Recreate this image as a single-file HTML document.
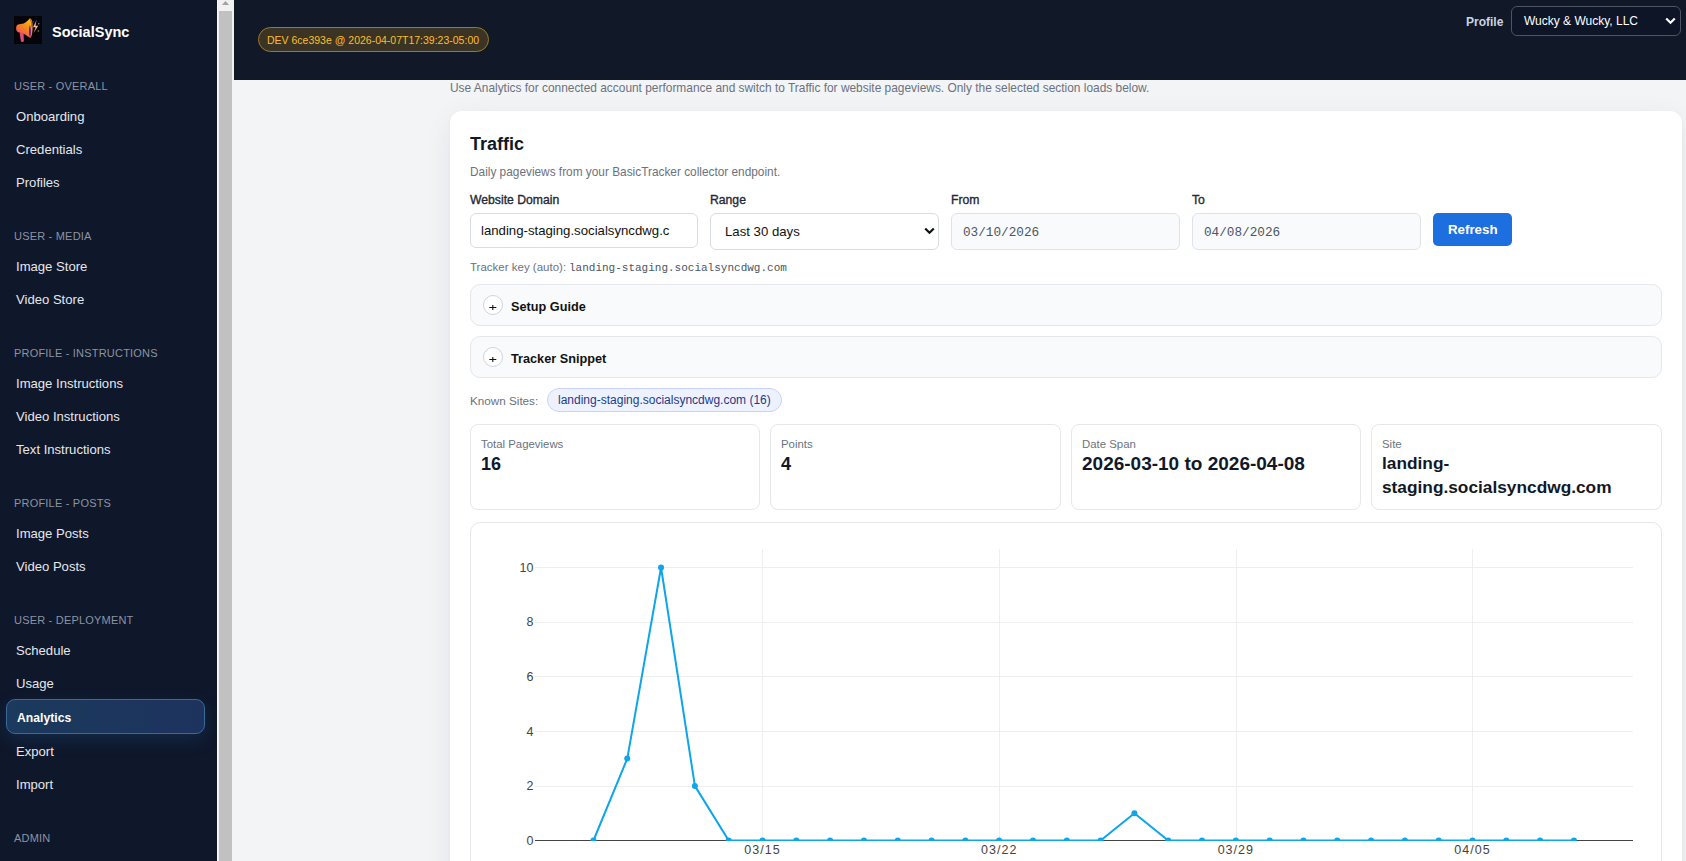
<!DOCTYPE html>
<html><head><meta charset="utf-8"><title>SocialSync - Analytics</title>
<style>
html,body{margin:0;padding:0;}
body{width:1686px;height:861px;overflow:hidden;position:relative;background:#f3f4f6;font-family:"Liberation Sans",sans-serif;}
.t{position:absolute;line-height:1;white-space:pre;}
</style></head><body>
<div style="position:absolute;left:0px;top:0px;width:217px;height:861px;background:#0f172a"></div>
<div style="position:absolute;left:14px;top:16px;width:28px;height:28px;background:#050409;overflow:hidden">
<svg width="28" height="28" viewBox="0 0 28 28">
<defs>
<linearGradient id="mg" x1="0.8" y1="0" x2="0.2" y2="1"><stop offset="0" stop-color="#f7c21a"/><stop offset="0.45" stop-color="#f7871e"/><stop offset="1" stop-color="#e8407e"/></linearGradient>
<linearGradient id="lg" x1="0.5" y1="0" x2="0.5" y2="1"><stop offset="0" stop-color="#9a62d8"/><stop offset="0.5" stop-color="#f0b6b0"/><stop offset="1" stop-color="#d8a040"/></linearGradient>
<filter id="bl" x="-0.2" y="-0.2" width="1.4" height="1.4"><feGaussianBlur stdDeviation="0.35"/></filter>
</defs>
<g filter="url(#bl)">
<path d="M5.6 16.6 L9.6 17.6 L9.9 24.4 C9.8 26.4 7.3 26.6 6.8 24.8 Z" fill="#e0487e"/>
<path d="M2.1 12.4 C2.1 9.4 3.4 8.5 5.5 8.3 L9.6 7.5 C12.2 6.7 14 4.4 15.6 2.6 C17.6 1.9 18.7 6 18.6 11.2 C18.5 17.2 17.6 21.6 16.1 21.7 C14.6 21.3 12.6 19.2 10 18 L5.5 16.6 C3.2 16.1 2.1 14.8 2.1 12.4 Z" fill="url(#mg)"/>
<path d="M6.6 8.6 C6 11 6 14 6.8 16.6" stroke="#f07a20" stroke-width="0.8" fill="none" opacity="0.8"/>
<path d="M15.6 9.2 C17.2 11 17.4 17.2 16.1 21.2 C14.9 19.6 14.6 15 15.6 9.2 Z" fill="#6a2090"/>
<path d="M15.9 3.2 C17.6 5 17.9 9 17.6 11" stroke="#d8541c" stroke-width="1.1" fill="none"/>
<path d="M22.6 3.8 L19 11.2 L21.6 11.2 L19.6 17.2 L24.2 9.8 L21.6 9.8 Z" fill="url(#lg)"/>
<circle cx="24.8" cy="7.8" r="0.7" fill="#b8a030"/>
<circle cx="24.4" cy="15" r="0.7" fill="#a89030"/>
<circle cx="19.2" cy="5.8" r="0.5" fill="#a89030"/>
</g>
</svg></div>
<div class="t" style="left:52px;top:25px;font-size:14.5px;font-weight:700;color:#ffffff;font-family:'Liberation Sans';">SocialSync</div>
<div class="t" style="left:14px;top:81px;font-size:11px;font-weight:400;color:#8b94a3;font-family:'Liberation Sans';letter-spacing:0.2px">USER - OVERALL</div>
<div class="t" style="left:16px;top:110px;font-size:13.1px;font-weight:400;color:#e5e7eb;font-family:'Liberation Sans';">Onboarding</div>
<div class="t" style="left:16px;top:143px;font-size:13.1px;font-weight:400;color:#e5e7eb;font-family:'Liberation Sans';">Credentials</div>
<div class="t" style="left:16px;top:176px;font-size:13.1px;font-weight:400;color:#e5e7eb;font-family:'Liberation Sans';">Profiles</div>
<div class="t" style="left:14px;top:231px;font-size:11px;font-weight:400;color:#8b94a3;font-family:'Liberation Sans';letter-spacing:0.2px">USER - MEDIA</div>
<div class="t" style="left:16px;top:260px;font-size:13.1px;font-weight:400;color:#e5e7eb;font-family:'Liberation Sans';">Image Store</div>
<div class="t" style="left:16px;top:293px;font-size:13.1px;font-weight:400;color:#e5e7eb;font-family:'Liberation Sans';">Video Store</div>
<div class="t" style="left:14px;top:348px;font-size:11px;font-weight:400;color:#8b94a3;font-family:'Liberation Sans';letter-spacing:0.2px">PROFILE - INSTRUCTIONS</div>
<div class="t" style="left:16px;top:377px;font-size:13.1px;font-weight:400;color:#e5e7eb;font-family:'Liberation Sans';">Image Instructions</div>
<div class="t" style="left:16px;top:410px;font-size:13.1px;font-weight:400;color:#e5e7eb;font-family:'Liberation Sans';">Video Instructions</div>
<div class="t" style="left:16px;top:443px;font-size:13.1px;font-weight:400;color:#e5e7eb;font-family:'Liberation Sans';">Text Instructions</div>
<div class="t" style="left:14px;top:498px;font-size:11px;font-weight:400;color:#8b94a3;font-family:'Liberation Sans';letter-spacing:0.2px">PROFILE - POSTS</div>
<div class="t" style="left:16px;top:527px;font-size:13.1px;font-weight:400;color:#e5e7eb;font-family:'Liberation Sans';">Image Posts</div>
<div class="t" style="left:16px;top:560px;font-size:13.1px;font-weight:400;color:#e5e7eb;font-family:'Liberation Sans';">Video Posts</div>
<div class="t" style="left:14px;top:615px;font-size:11px;font-weight:400;color:#8b94a3;font-family:'Liberation Sans';letter-spacing:0.2px">USER - DEPLOYMENT</div>
<div class="t" style="left:16px;top:644px;font-size:13.1px;font-weight:400;color:#e5e7eb;font-family:'Liberation Sans';">Schedule</div>
<div class="t" style="left:16px;top:677px;font-size:13.1px;font-weight:400;color:#e5e7eb;font-family:'Liberation Sans';">Usage</div>
<div style="position:absolute;left:6px;top:699px;width:197px;height:33px;border:1px solid #3a6a98;border-radius:9px;background:linear-gradient(90deg,#1b3a5c,#1d335e);box-shadow:0 6px 18px rgba(30,120,200,0.18)"></div>
<div class="t" style="left:17px;top:712px;font-size:12.2px;font-weight:700;color:#ffffff;font-family:'Liberation Sans';">Analytics</div>
<div class="t" style="left:16px;top:745px;font-size:13.1px;font-weight:400;color:#e5e7eb;font-family:'Liberation Sans';">Export</div>
<div class="t" style="left:16px;top:778px;font-size:13.1px;font-weight:400;color:#e5e7eb;font-family:'Liberation Sans';">Import</div>
<div class="t" style="left:14px;top:833px;font-size:11px;font-weight:400;color:#8b94a3;font-family:'Liberation Sans';letter-spacing:0.2px">ADMIN</div>
<div style="position:absolute;left:217px;top:0px;width:17px;height:861px;background:#f1f1f1"></div>
<div style="position:absolute;left:217px;top:0px;width:1px;height:861px;background:#fafafa"></div>
<div style="position:absolute;left:219px;top:11px;width:13px;height:850px;background:#c1c1c1"></div>
<svg style="position:absolute;left:217px;top:0" width="17" height="8"><polygon points="4.9,4.9 12.1,4.9 8.5,0.9" fill="#a3a3a3"/></svg>
<div style="position:absolute;left:232px;top:80px;width:2px;height:781px;background:#f3f4f6"></div>
<div style="position:absolute;left:234px;top:0px;width:1452px;height:80px;background:#111827"></div>
<div style="position:absolute;left:258px;top:27px;width:229px;height:23px;border:1px solid #9c7a25;border-radius:13px;background:#3b3424"></div>
<div class="t" style="left:267px;top:35px;font-size:10.5px;font-weight:400;color:#fbbf24;font-family:'Liberation Sans';">DEV 6ce393e @ 2026-04-07T17:39:23-05:00</div>
<div class="t" style="left:1466px;top:16px;font-size:12px;font-weight:700;color:#cbd5e1;font-family:'Liberation Sans';">Profile</div>
<div style="position:absolute;left:1511px;top:6px;width:168px;height:28px;border:1px solid #4b5563;border-radius:6px;background:#0e1527"></div>
<div class="t" style="left:1524px;top:15px;font-size:12px;font-weight:400;color:#ffffff;font-family:'Liberation Sans';">Wucky &amp; Wucky, LLC</div>
<svg style="position:absolute;left:1665px;top:17px" width="11" height="8" viewBox="0 0 11 8"><path d="M1.2 1.5 L5.5 5.8 L9.8 1.5" stroke="#fff" stroke-width="2.2" fill="none"/></svg>
<div class="t" style="left:450px;top:83px;font-size:11.92px;font-weight:400;color:#6b7280;font-family:'Liberation Sans';">Use Analytics for connected account performance and switch to Traffic for website pageviews. Only the selected section loads below.</div>
<div style="position:absolute;left:450px;top:111px;width:1232px;height:800px;background:#fff;border-radius:12px;box-shadow:0 1px 3px rgba(0,0,0,0.04),0 8px 30px rgba(15,23,42,0.07)"></div>
<div class="t" style="left:470px;top:135px;font-size:18px;font-weight:700;color:#111827;font-family:'Liberation Sans';">Traffic</div>
<div class="t" style="left:470px;top:167px;font-size:11.85px;font-weight:400;color:#6b7280;font-family:'Liberation Sans';">Daily pageviews from your BasicTracker collector endpoint.</div>
<div class="t" style="left:470px;top:194px;font-size:12.2px;font-weight:400;color:#1f2937;font-family:'Liberation Sans';-webkit-text-stroke:0.35px #1f2937">Website Domain</div>
<div class="t" style="left:710px;top:194px;font-size:12.2px;font-weight:400;color:#1f2937;font-family:'Liberation Sans';-webkit-text-stroke:0.35px #1f2937">Range</div>
<div class="t" style="left:951px;top:194px;font-size:12.2px;font-weight:400;color:#1f2937;font-family:'Liberation Sans';-webkit-text-stroke:0.35px #1f2937">From</div>
<div class="t" style="left:1192px;top:194px;font-size:12.2px;font-weight:400;color:#1f2937;font-family:'Liberation Sans';-webkit-text-stroke:0.35px #1f2937">To</div>
<div style="position:absolute;left:470px;top:213px;width:226px;height:33px;border:1px solid #d8dce3;border-radius:6px;background:#fff"></div>
<div class="t" style="left:481px;top:224px;font-size:13.2px;font-weight:400;color:#111111;font-family:'Liberation Sans';">landing-staging.socialsyncdwg.c</div>
<div style="position:absolute;left:710px;top:213px;width:227px;height:35px;border:1px solid #d8dce3;border-radius:6px;background:#fff"></div>
<div class="t" style="left:725px;top:225px;font-size:13.2px;font-weight:400;color:#111111;font-family:'Liberation Sans';">Last 30 days</div>
<svg style="position:absolute;left:923.5px;top:227px" width="11" height="8" viewBox="0 0 11 8"><path d="M1.2 1.5 L5.5 5.8 L9.8 1.5" stroke="#111" stroke-width="2.2" fill="none"/></svg>
<div style="position:absolute;left:951px;top:213px;width:227px;height:35px;border:1px solid #dfe2e7;border-radius:6px;background:#f9fafb"></div>
<div class="t" style="left:963px;top:227px;font-size:12.7px;font-weight:400;color:#4b5563;font-family:'Liberation Mono';">03/10/2026</div>
<div style="position:absolute;left:1192px;top:213px;width:227px;height:35px;border:1px solid #dfe2e7;border-radius:6px;background:#f9fafb"></div>
<div class="t" style="left:1204px;top:227px;font-size:12.7px;font-weight:400;color:#4b5563;font-family:'Liberation Mono';">04/08/2026</div>
<div style="position:absolute;left:1433px;top:213px;width:79px;height:33px;border-radius:5px;background:#1d6fe0"></div>
<div class="t" style="left:1448px;top:223px;font-size:13.3px;font-weight:700;color:#ffffff;font-family:'Liberation Sans';">Refresh</div>
<div class="t" style="left:470px;top:262px;font-size:11.5px;font-weight:400;color:#6b7280;font-family:'Liberation Sans';">Tracker key (auto): </div>
<div class="t" style="left:569px;top:263px;font-size:11px;font-weight:400;color:#4b5563;font-family:'Liberation Mono';">landing-staging.socialsyncdwg.com</div>
<div style="position:absolute;left:470px;top:284px;width:1190px;height:40px;border:1px solid #e5e7eb;border-radius:10px;background:#f8fafc"></div>
<div style="position:absolute;left:483px;top:295px;width:18px;height:18px;border:1px solid #cbd5e1;border-radius:50%;background:#fff"></div>
<svg style="position:absolute;left:488px;top:304px" width="10" height="8" viewBox="0 0 10 8"><path d="M1.3 3.5 H8.3 M4.8 1 V6" stroke="#111" stroke-width="1.1" fill="none"/></svg>
<div class="t" style="left:511px;top:301px;font-size:12.7px;font-weight:700;color:#111111;font-family:'Liberation Sans';">Setup Guide</div>
<div style="position:absolute;left:470px;top:336px;width:1190px;height:40px;border:1px solid #e5e7eb;border-radius:10px;background:#f8fafc"></div>
<div style="position:absolute;left:483px;top:347px;width:18px;height:18px;border:1px solid #cbd5e1;border-radius:50%;background:#fff"></div>
<svg style="position:absolute;left:488px;top:356px" width="10" height="8" viewBox="0 0 10 8"><path d="M1.3 3.5 H8.3 M4.8 1 V6" stroke="#111" stroke-width="1.1" fill="none"/></svg>
<div class="t" style="left:511px;top:353px;font-size:12.7px;font-weight:700;color:#111111;font-family:'Liberation Sans';">Tracker Snippet</div>
<div class="t" style="left:470px;top:395px;font-size:11.7px;font-weight:400;color:#6b7280;font-family:'Liberation Sans';">Known Sites:</div>
<div style="position:absolute;left:547px;top:388px;width:233px;height:22px;border:1px solid #c7d2fe;border-radius:12px;background:#eef2ff"></div>
<div class="t" style="left:558px;top:394px;font-size:12px;font-weight:400;color:#1e3a8a;font-family:'Liberation Sans';">landing-staging.socialsyncdwg.com (16)</div>
<div style="position:absolute;left:470px;top:424px;width:288px;height:84px;border:1px solid #e5e7eb;border-radius:8px;background:#fff"></div>
<div class="t" style="left:481px;top:439px;font-size:11.4px;font-weight:400;color:#6b7280;font-family:'Liberation Sans';">Total Pageviews</div>
<div class="t" style="left:481px;top:455px;font-size:18px;font-weight:700;color:#111827;font-family:'Liberation Sans';">16</div>
<div style="position:absolute;left:770px;top:424px;width:289px;height:84px;border:1px solid #e5e7eb;border-radius:8px;background:#fff"></div>
<div class="t" style="left:781px;top:439px;font-size:11.4px;font-weight:400;color:#6b7280;font-family:'Liberation Sans';">Points</div>
<div class="t" style="left:781px;top:455px;font-size:18px;font-weight:700;color:#111827;font-family:'Liberation Sans';">4</div>
<div style="position:absolute;left:1071px;top:424px;width:288px;height:84px;border:1px solid #e5e7eb;border-radius:8px;background:#fff"></div>
<div class="t" style="left:1082px;top:439px;font-size:11.4px;font-weight:400;color:#6b7280;font-family:'Liberation Sans';">Date Span</div>
<div class="t" style="left:1082px;top:454px;font-size:19px;font-weight:700;color:#111827;font-family:'Liberation Sans';">2026-03-10 to 2026-04-08</div>
<div style="position:absolute;left:1371px;top:424px;width:289px;height:84px;border:1px solid #e5e7eb;border-radius:8px;background:#fff"></div>
<div class="t" style="left:1382px;top:439px;font-size:11.4px;font-weight:400;color:#6b7280;font-family:'Liberation Sans';">Site</div>
<div class="t" style="left:1382px;top:455px;font-size:17.3px;font-weight:700;color:#111827;font-family:'Liberation Sans';">landing-</div>
<div class="t" style="left:1382px;top:479px;font-size:17.3px;font-weight:700;color:#111827;font-family:'Liberation Sans';">staging.socialsyncdwg.com</div>
<div style="position:absolute;left:470px;top:522px;width:1190px;height:400px;border:1px solid #e5e7eb;border-radius:10px;background:#fff"></div>
<svg style="position:absolute;left:0;top:0" width="1686" height="861"><rect x="535" y="786" width="1098" height="1" fill="#eeeeee"/><rect x="535" y="731" width="1098" height="1" fill="#eeeeee"/><rect x="535" y="676" width="1098" height="1" fill="#eeeeee"/><rect x="535" y="622" width="1098" height="1" fill="#eeeeee"/><rect x="535" y="567" width="1098" height="1" fill="#eeeeee"/><rect x="762" y="549" width="1" height="291" fill="#eeeeee"/><rect x="999" y="549" width="1" height="291" fill="#eeeeee"/><rect x="1236" y="549" width="1" height="291" fill="#eeeeee"/><rect x="1472" y="549" width="1" height="291" fill="#eeeeee"/><rect x="535" y="840" width="1098" height="1" fill="#444444"/><clipPath id="pc"><rect x="535" y="549" width="1098" height="292"/></clipPath><g clip-path="url(#pc)"><polyline points="593.45,840.50 627.26,758.60 661.07,567.50 694.88,785.90 728.69,840.50 762.50,840.50 796.31,840.50 830.12,840.50 863.93,840.50 897.74,840.50 931.55,840.50 965.36,840.50 999.17,840.50 1032.98,840.50 1066.79,840.50 1100.60,840.50 1134.41,813.20 1168.22,840.50 1202.03,840.50 1235.84,840.50 1269.65,840.50 1303.46,840.50 1337.27,840.50 1371.08,840.50 1404.89,840.50 1438.70,840.50 1472.51,840.50 1506.32,840.50 1540.13,840.50 1573.94,840.50" fill="none" stroke="#0ea5e9" stroke-width="2" stroke-linejoin="round"/><circle cx="593.45" cy="840.50" r="3" fill="#0ea5e9"/><circle cx="627.26" cy="758.60" r="3" fill="#0ea5e9"/><circle cx="661.07" cy="567.50" r="3" fill="#0ea5e9"/><circle cx="694.88" cy="785.90" r="3" fill="#0ea5e9"/><circle cx="728.69" cy="840.50" r="3" fill="#0ea5e9"/><circle cx="762.50" cy="840.50" r="3" fill="#0ea5e9"/><circle cx="796.31" cy="840.50" r="3" fill="#0ea5e9"/><circle cx="830.12" cy="840.50" r="3" fill="#0ea5e9"/><circle cx="863.93" cy="840.50" r="3" fill="#0ea5e9"/><circle cx="897.74" cy="840.50" r="3" fill="#0ea5e9"/><circle cx="931.55" cy="840.50" r="3" fill="#0ea5e9"/><circle cx="965.36" cy="840.50" r="3" fill="#0ea5e9"/><circle cx="999.17" cy="840.50" r="3" fill="#0ea5e9"/><circle cx="1032.98" cy="840.50" r="3" fill="#0ea5e9"/><circle cx="1066.79" cy="840.50" r="3" fill="#0ea5e9"/><circle cx="1100.60" cy="840.50" r="3" fill="#0ea5e9"/><circle cx="1134.41" cy="813.20" r="3" fill="#0ea5e9"/><circle cx="1168.22" cy="840.50" r="3" fill="#0ea5e9"/><circle cx="1202.03" cy="840.50" r="3" fill="#0ea5e9"/><circle cx="1235.84" cy="840.50" r="3" fill="#0ea5e9"/><circle cx="1269.65" cy="840.50" r="3" fill="#0ea5e9"/><circle cx="1303.46" cy="840.50" r="3" fill="#0ea5e9"/><circle cx="1337.27" cy="840.50" r="3" fill="#0ea5e9"/><circle cx="1371.08" cy="840.50" r="3" fill="#0ea5e9"/><circle cx="1404.89" cy="840.50" r="3" fill="#0ea5e9"/><circle cx="1438.70" cy="840.50" r="3" fill="#0ea5e9"/><circle cx="1472.51" cy="840.50" r="3" fill="#0ea5e9"/><circle cx="1506.32" cy="840.50" r="3" fill="#0ea5e9"/><circle cx="1540.13" cy="840.50" r="3" fill="#0ea5e9"/><circle cx="1573.94" cy="840.50" r="3" fill="#0ea5e9"/></g><text x="533.5" y="844.8" text-anchor="end" font-family="Liberation Sans" font-size="12.5" fill="#444">0</text><text x="533.5" y="790.2" text-anchor="end" font-family="Liberation Sans" font-size="12.5" fill="#444">2</text><text x="533.5" y="735.6" text-anchor="end" font-family="Liberation Sans" font-size="12.5" fill="#444">4</text><text x="533.5" y="681.0" text-anchor="end" font-family="Liberation Sans" font-size="12.5" fill="#444">6</text><text x="533.5" y="626.4" text-anchor="end" font-family="Liberation Sans" font-size="12.5" fill="#444">8</text><text x="533.5" y="571.8" text-anchor="end" font-family="Liberation Sans" font-size="12.5" fill="#444">10</text><text x="762.5" y="854" text-anchor="middle" font-family="Liberation Sans" font-size="12.5" letter-spacing="1" fill="#444">03/15</text><text x="999.2" y="854" text-anchor="middle" font-family="Liberation Sans" font-size="12.5" letter-spacing="1" fill="#444">03/22</text><text x="1235.8" y="854" text-anchor="middle" font-family="Liberation Sans" font-size="12.5" letter-spacing="1" fill="#444">03/29</text><text x="1472.5" y="854" text-anchor="middle" font-family="Liberation Sans" font-size="12.5" letter-spacing="1" fill="#444">04/05</text></svg>
</body></html>
